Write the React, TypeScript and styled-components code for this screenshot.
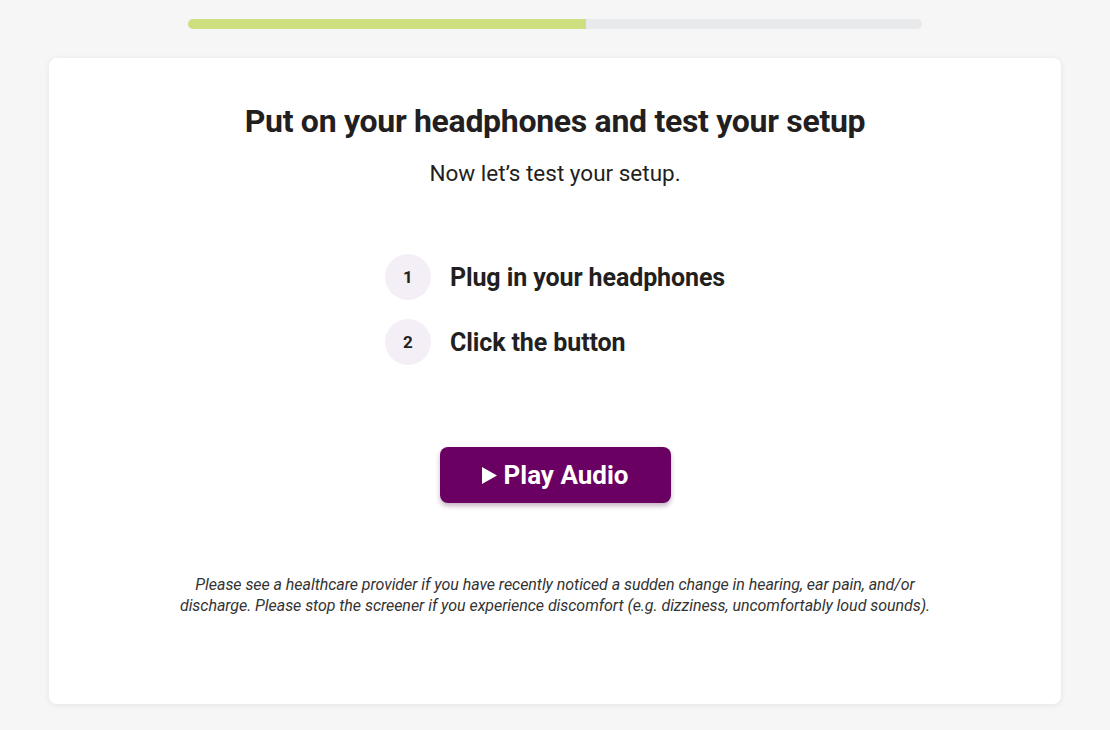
import styled, { createGlobalStyle } from "styled-components";

const GlobalStyle = createGlobalStyle`
  html, body {
    margin: 0;
    padding: 0;
    background: #f6f6f6;
    font-family: Roboto, "Liberation Sans", sans-serif;
    color: #231f20;
  }
`;

const Page = styled.div`
  display: flex;
  flex-direction: column;
  align-items: center;
  padding: 19px 50px 26px;
`;

const Track = styled.div`
  width: 734px;
  height: 10px;
  border-radius: 6px;
  background: #e8e9eb;
  overflow: hidden;
`;

const Fill = styled.div`
  height: 100%;
  background: #cddf7f;
`;

const Card = styled.div`
  margin-top: 29px;
  width: 1012px;
  height: 646px;
  box-sizing: border-box;
  background: #fff;
  border-radius: 8px;
  box-shadow: 0 1px 6px rgba(0, 0, 0, 0.08);
  display: flex;
  flex-direction: column;
  align-items: center;
  padding-top: 44px;
`;

const Title = styled.h1`
  margin: 0;
  font-size: 32px;
  font-weight: 700;
  line-height: 38px;
  letter-spacing: -0.3px;
`;

const Subtitle = styled.p`
  margin: 18px 0 0;
  font-size: 22.5px;
  line-height: 30px;
`;

const Steps = styled.ol`
  list-style: none;
  margin: 66px 0 0;
  padding: 0;
  display: flex;
  flex-direction: column;
  gap: 19px;
`;

const Step = styled.li`
  display: flex;
  align-items: center;
  gap: 19px;
`;

const Badge = styled.span`
  width: 46px;
  height: 46px;
  border-radius: 50%;
  background: #f4eff6;
  display: flex;
  align-items: center;
  justify-content: center;
  font-size: 17px;
  font-weight: 700;
`;

const StepText = styled.span`
  font-size: 25px;
  font-weight: 700;
  letter-spacing: -0.1px;
`;

const PlayButton = styled.button`
  margin-top: 82px;
  width: 231px;
  height: 56px;
  border: none;
  border-radius: 8px;
  background: #690062;
  color: #fff;
  font-family: inherit;
  font-size: 26px;
  font-weight: 700;
  display: flex;
  align-items: center;
  justify-content: center;
  gap: 7px;
  box-shadow: 0 3px 5px rgba(60, 0, 60, 0.3);
  cursor: pointer;
`;

const Disclaimer = styled.p`
  margin: 71px 0 0;
  width: 770px;
  text-align: center;
  font-size: 16px;
  line-height: 21px;
  font-style: italic;
  letter-spacing: -0.05px;
  color: #333;
`;

const steps = ["Plug in your headphones", "Click the button"];

export default function App() {
  return (
    <>
      <GlobalStyle />
      <Page>
        <Track>
          <Fill style={{ width: `${(398 / 734) * 100}%` }} />
        </Track>
        <Card>
          <Title>Put on your headphones and test your setup</Title>
          <Subtitle>Now let’s test your setup.</Subtitle>
          <Steps>
            {steps.map((s, i) => (
              <Step key={s}>
                <Badge>{i + 1}</Badge>
                <StepText>{s}</StepText>
              </Step>
            ))}
          </Steps>
          <PlayButton>
            <svg width="15" height="17" viewBox="0 0 15 17">
              <path d="M0 0 L15 8.5 L0 17 Z" fill="#fff" />
            </svg>
            Play Audio
          </PlayButton>
          <Disclaimer>
            Please see a healthcare provider if you have recently noticed a sudden change in hearing,
            ear pain, and/or discharge. Please stop the screener if you experience discomfort (e.g.
            dizziness, uncomfortably loud sounds).
          </Disclaimer>
        </Card>
      </Page>
    </>
  );
}
